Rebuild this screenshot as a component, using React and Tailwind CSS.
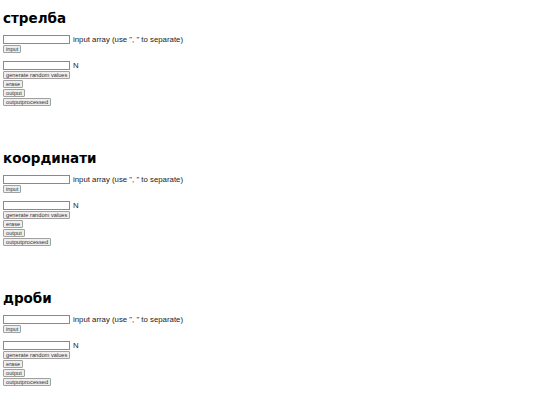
const sections = ["стрелба", "координати", "дроби"];

const Btn = ({ children }) => (
  <div>
    <button className="h-[8px] px-[2px] border border-[#a0a0a0] bg-[#efefef] rounded-[1px] text-[5.7px] leading-[6px] text-[#333] flex items-center">
      {children}
    </button>
  </div>
);

const Section = ({ title }) => (
  <div className="h-[140px] px-[3px] pt-[9px]">
    <h2 className="text-[13.5px] leading-[18px] font-bold font-['DejaVu_Sans',sans-serif] text-black">
      {title}
    </h2>
    <div className="mt-[8px] flex items-center gap-[3px]">
      <input className="w-[67px] h-[9px] border border-[#8a8a8a] bg-white" />
      <span className="text-[7.8px] leading-[9px] text-[#222]">
        input array (use ", " to separate)
      </span>
    </div>
    <div className="mt-[1px]">
      <Btn>input</Btn>
    </div>
    <div className="mt-[8px] flex items-center gap-[3px]">
      <input className="w-[67px] h-[9px] border border-[#8a8a8a] bg-white" />
      <span className="text-[7.8px] leading-[9px] text-[#222]">N</span>
    </div>
    <div className="mt-[1px] flex flex-col gap-[1px]">
      <Btn>generate random values</Btn>
      <Btn>erase</Btn>
      <Btn>output</Btn>
      <Btn>outputprocessed</Btn>
    </div>
  </div>
);

export default function App() {
  return (
    <div className="w-[540px] h-[405px] bg-white overflow-hidden font-['Liberation_Sans',Arial,sans-serif]">
      {sections.map((s) => (
        <Section key={s} title={s} />
      ))}
    </div>
  );
}
